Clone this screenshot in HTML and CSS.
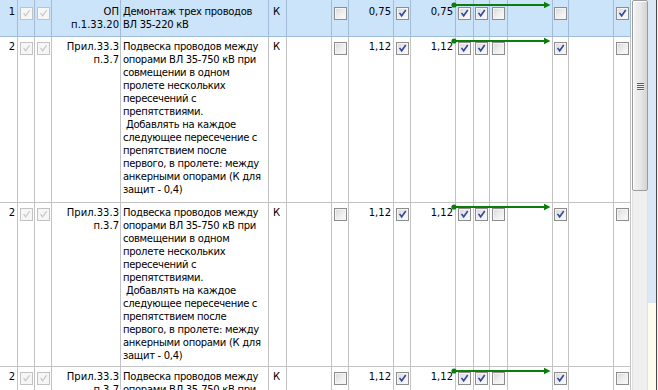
FILE: index.html
```html
<!DOCTYPE html>
<html>
<head>
<meta charset="utf-8">
<link rel="stylesheet" href="styles.css">
</head>
<body>
<div class="screen">
  <div class="grid">
    <div class="row row-sel row-first">
      <div class="c num">1</div>
      <div class="c cb"><i class="chk dis"><svg viewBox="0 0 13 13"><path d="M3.5 6.5 L5.5 9.2 L9.8 3.2"/></svg></i></div>
      <div class="c cb"><i class="chk dis"><svg viewBox="0 0 13 13"><path d="M3.5 6.5 L5.5 9.2 L9.8 3.2"/></svg></i></div>
      <div class="c code">ОП<br>п.1.33.20</div>
      <div class="c desc"><span class="ln">Демонтаж трех проводов</span><span class="ln">ВЛ 35-220 кВ</span></div>
      <div class="c k">К</div>
      <div class="c"></div>
      <div class="c cb"><i class="chk"></i></div>
      <div class="c val">0,75</div>
      <div class="c cb"><i class="chk"><svg viewBox="0 0 13 13"><path d="M3.5 6.5 L5.5 9.2 L9.8 3.2"/></svg></i></div>
      <div class="c val">0,75</div>
      <div class="c cb"><i class="chk"><svg viewBox="0 0 13 13"><path d="M3.5 6.5 L5.5 9.2 L9.8 3.2"/></svg></i></div>
      <div class="c cb"><i class="chk"><svg viewBox="0 0 13 13"><path d="M3.5 6.5 L5.5 9.2 L9.8 3.2"/></svg></i></div>
      <div class="c cb"><i class="chk"></i></div>
      <div class="c"></div>
      <div class="c cb"><i class="chk"></i></div>
      <div class="c"></div>
      <div class="c cb"><i class="chk"><svg viewBox="0 0 13 13"><path d="M3.5 6.5 L5.5 9.2 L9.8 3.2"/></svg></i></div>
      <svg class="arrow" viewBox="0 0 100 8"><circle cx="3" cy="4" r="2.6"/><line x1="3" y1="4" x2="94" y2="4"/><polygon points="93,0.8 99.5,4 93,7.2"/></svg>
    </div>

    <div class="row row-a">
      <div class="c num">2</div>
      <div class="c cb"><i class="chk dis"><svg viewBox="0 0 13 13"><path d="M3.5 6.5 L5.5 9.2 L9.8 3.2"/></svg></i></div>
      <div class="c cb"><i class="chk dis"><svg viewBox="0 0 13 13"><path d="M3.5 6.5 L5.5 9.2 L9.8 3.2"/></svg></i></div>
      <div class="c code">Прил.33.3<br>п.3.7</div>
      <div class="c desc"><span class="ln">Подвеска проводов между</span><span class="ln">опорами ВЛ 35-750 кВ при</span><span class="ln">совмещении в одном</span><span class="ln">пролете нескольких</span><span class="ln">пересечений с</span><span class="ln">препятствиями.</span><span class="ln"> Добавлять на каждое</span><span class="ln">следующее пересечение с</span><span class="ln">препятствием после</span><span class="ln">первого, в пролете: между</span><span class="ln">анкерными опорами (К для</span><span class="ln">защит - 0,4)</span></div>
      <div class="c k">К</div>
      <div class="c"></div>
      <div class="c cb"><i class="chk"></i></div>
      <div class="c val">1,12</div>
      <div class="c cb"><i class="chk"><svg viewBox="0 0 13 13"><path d="M3.5 6.5 L5.5 9.2 L9.8 3.2"/></svg></i></div>
      <div class="c val">1,12</div>
      <div class="c cb"><i class="chk"><svg viewBox="0 0 13 13"><path d="M3.5 6.5 L5.5 9.2 L9.8 3.2"/></svg></i></div>
      <div class="c cb"><i class="chk"><svg viewBox="0 0 13 13"><path d="M3.5 6.5 L5.5 9.2 L9.8 3.2"/></svg></i></div>
      <div class="c cb"><i class="chk"></i></div>
      <div class="c"></div>
      <div class="c cb"><i class="chk"><svg viewBox="0 0 13 13"><path d="M3.5 6.5 L5.5 9.2 L9.8 3.2"/></svg></i></div>
      <div class="c"></div>
      <div class="c cb"><i class="chk"></i></div>
      <svg class="arrow" viewBox="0 0 100 8"><circle cx="3" cy="4" r="2.6"/><line x1="3" y1="4" x2="94" y2="4"/><polygon points="93,0.8 99.5,4 93,7.2"/></svg>
    </div>

    <div class="row row-b">
      <div class="c num">2</div>
      <div class="c cb"><i class="chk dis"><svg viewBox="0 0 13 13"><path d="M3.5 6.5 L5.5 9.2 L9.8 3.2"/></svg></i></div>
      <div class="c cb"><i class="chk dis"><svg viewBox="0 0 13 13"><path d="M3.5 6.5 L5.5 9.2 L9.8 3.2"/></svg></i></div>
      <div class="c code">Прил.33.3<br>п.3.7</div>
      <div class="c desc"><span class="ln">Подвеска проводов между</span><span class="ln">опорами ВЛ 35-750 кВ при</span><span class="ln">совмещении в одном</span><span class="ln">пролете нескольких</span><span class="ln">пересечений с</span><span class="ln">препятствиями.</span><span class="ln"> Добавлять на каждое</span><span class="ln">следующее пересечение с</span><span class="ln">препятствием после</span><span class="ln">первого, в пролете: между</span><span class="ln">анкерными опорами (К для</span><span class="ln">защит - 0,4)</span></div>
      <div class="c k">К</div>
      <div class="c"></div>
      <div class="c cb"><i class="chk"></i></div>
      <div class="c val">1,12</div>
      <div class="c cb"><i class="chk"><svg viewBox="0 0 13 13"><path d="M3.5 6.5 L5.5 9.2 L9.8 3.2"/></svg></i></div>
      <div class="c val">1,12</div>
      <div class="c cb"><i class="chk"><svg viewBox="0 0 13 13"><path d="M3.5 6.5 L5.5 9.2 L9.8 3.2"/></svg></i></div>
      <div class="c cb"><i class="chk"><svg viewBox="0 0 13 13"><path d="M3.5 6.5 L5.5 9.2 L9.8 3.2"/></svg></i></div>
      <div class="c cb"><i class="chk"></i></div>
      <div class="c"></div>
      <div class="c cb"><i class="chk"><svg viewBox="0 0 13 13"><path d="M3.5 6.5 L5.5 9.2 L9.8 3.2"/></svg></i></div>
      <div class="c"></div>
      <div class="c cb"><i class="chk"></i></div>
      <svg class="arrow" viewBox="0 0 100 8"><circle cx="3" cy="4" r="2.6"/><line x1="3" y1="4" x2="94" y2="4"/><polygon points="93,0.8 99.5,4 93,7.2"/></svg>
    </div>

    <div class="row row-c">
      <div class="c num">2</div>
      <div class="c cb"><i class="chk dis"><svg viewBox="0 0 13 13"><path d="M3.5 6.5 L5.5 9.2 L9.8 3.2"/></svg></i></div>
      <div class="c cb"><i class="chk dis"><svg viewBox="0 0 13 13"><path d="M3.5 6.5 L5.5 9.2 L9.8 3.2"/></svg></i></div>
      <div class="c code">Прил.33.3<br>п.3.7</div>
      <div class="c desc"><span class="ln">Подвеска проводов между</span><span class="ln">опорами ВЛ 35-750 кВ при</span></div>
      <div class="c k">К</div>
      <div class="c"></div>
      <div class="c cb"><i class="chk"></i></div>
      <div class="c val">1,12</div>
      <div class="c cb"><i class="chk"><svg viewBox="0 0 13 13"><path d="M3.5 6.5 L5.5 9.2 L9.8 3.2"/></svg></i></div>
      <div class="c val">1,12</div>
      <div class="c cb"><i class="chk"><svg viewBox="0 0 13 13"><path d="M3.5 6.5 L5.5 9.2 L9.8 3.2"/></svg></i></div>
      <div class="c cb"><i class="chk"><svg viewBox="0 0 13 13"><path d="M3.5 6.5 L5.5 9.2 L9.8 3.2"/></svg></i></div>
      <div class="c cb"><i class="chk"></i></div>
      <div class="c"></div>
      <div class="c cb"><i class="chk"><svg viewBox="0 0 13 13"><path d="M3.5 6.5 L5.5 9.2 L9.8 3.2"/></svg></i></div>
      <div class="c"></div>
      <div class="c cb"><i class="chk"></i></div>
      <svg class="arrow" viewBox="0 0 100 8"><circle cx="3" cy="4" r="2.6"/><line x1="3" y1="4" x2="94" y2="4"/><polygon points="93,0.8 99.5,4 93,7.2"/></svg>
    </div>
  </div>

  <div class="gap"></div>
  <div class="vscroll">
    <div class="thumb"><span class="grip"></span></div>
    <div class="track"></div>
  </div>
  <div class="strip">
    <div class="strip-top"></div>
    <div class="strip-bot"></div>
  </div>
  <div class="edge"></div>
  <div class="rest"></div>
</div>
</body>
</html>
```

FILE: styles.css
```css
* { box-sizing: border-box; }
html, body { margin: 0; padding: 0; background: #fff; }
body { width: 658px; height: 390px; overflow: hidden; }

.screen {
  display: flex;
  width: 658px;
  height: 390px;
  overflow: hidden;
  font-family: "DejaVu Sans", "Liberation Sans", sans-serif;
  font-size: 10px;
  line-height: 13px;
  color: #000;
}

.grid {
  width: 631px;
  flex: none;
  display: flex;
  flex-direction: column;
  background: #fff;
}

.row {
  position: relative;
  flex: none;
  display: grid;
  grid-template-columns: 18px 17px 17px 69px 148px 18px 45px 17px 45px 17px 45px 18px 16px 18px 45px 16px 45px 17px;
  border-bottom: 1px solid #c3c3c3;
}
.row-first { height: 37px; }
.row-a { height: 166px; }
.row-b { height: 164px; }
.row-c { height: 40px; }

.c {
  border-right: 1px solid #c3c3c3;
  padding: 3px 2px 0 2px;
  white-space: nowrap;
  overflow: hidden;
}
.row-first .c { padding-top: 5px; }

.row-sel { background: #cce4f9; border-bottom-color: #a0bcd9; }
.row-sel .c { border-right-color: #a0bcd9; }

.num { text-align: right; padding-right: 2px; }
.code { text-align: right; padding-right: 1px; }
.desc { padding-left: 2px; letter-spacing: -0.3px; }
.ln { display: block; white-space: pre; }
.k { padding-left: 4px; }
.val { text-align: right; padding-right: 2px; }

.cb {
  display: flex;
  justify-content: center;
  align-items: flex-start;
  padding: 5px 0 0 0;
}
.row-first .cb { padding-top: 7px; }

.chk {
  display: block;
  width: 13px;
  height: 13px;
  border: 1px solid #8d8d8d;
  background: linear-gradient(135deg, #d6d6d6 0%, #ebebeb 45%, #fdfdfd 100%);
  box-shadow: inset 0 0 0 1px #f4f4f4;
  position: relative;
}
.chk svg {
  display: block;
  width: 11px;
  height: 11px;
}
.chk svg path {
  fill: none;
  stroke: #33489b;
  stroke-width: 1.9;
  stroke-linecap: square;
  stroke-linejoin: miter;
}
.chk.dis {
  border-color: #c2c2c2;
  background: #f6f6f6;
  box-shadow: none;
}
.chk.dis svg path { stroke: #c4c4c4; stroke-width: 1.4; }

.arrow {
  position: absolute;
  left: 451px;
  top: 0px;
  width: 100px;
  height: 8px;
  overflow: visible;
}
.row-first .arrow { top: 1px; }
.arrow circle, .arrow polygon { fill: #0a7d0a; }
.arrow line { stroke: #0a7d0a; stroke-width: 2; }

.gap { width: 1px; flex: none; background: #fff; }

.vscroll {
  width: 16px;
  flex: none;
  display: flex;
  flex-direction: column;
  background: #f0f0f0;
}
.thumb {
  height: 191px;
  flex: none;
  border: 1px solid #9b9b9b;
  border-radius: 2px;
  background: linear-gradient(90deg, #f3f3f3 0%, #e8e8e8 50%, #d3d3d3 100%);
  box-shadow: inset 1px 1px 0 #ffffff;
  display: flex;
  justify-content: center;
  padding-top: 82px;
}
.grip {
  display: block;
  width: 7px;
  height: 8px;
  background: repeating-linear-gradient(180deg, #5e5e5e 0 1px, #f0f0f0 1px 2px);
}
.track {
  flex: 1;
  background: #efefef;
  border-left: 1px solid #e2e2e2;
  border-right: 1px solid #e2e2e2;
}

.strip {
  width: 8px;
  flex: none;
  display: flex;
  flex-direction: column;
}
.strip-top { height: 303px; background: #dae8f6; }
.strip-bot { flex: 1; background: #fdfdee; }

.edge { width: 1px; flex: none; background: #4a4a4a; }
.rest { flex: 1; background: #f2f2f2; }
```
